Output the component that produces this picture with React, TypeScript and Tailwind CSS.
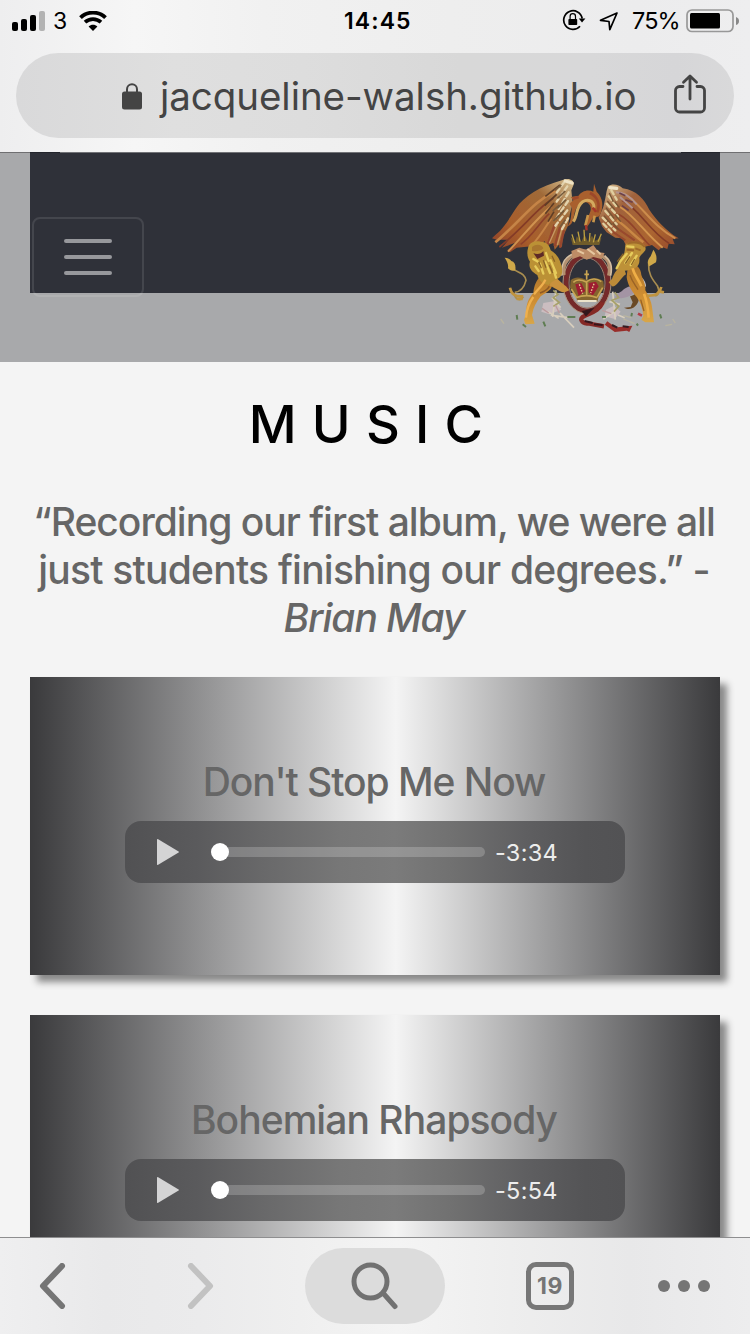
import React from "react";

const FONT = "font-['Inter','Liberation_Sans',sans-serif]";

function StatusBar() {
  return (
    <div className="flex h-10 items-center text-black">
      <svg className="ml-3 mt-px shrink-0" width="33" height="20" viewBox="0 0 33 20">
        <rect x="0" y="11" width="6" height="9" rx="2" />
        <rect x="9" y="8" width="6" height="12" rx="2" />
        <rect x="18" y="4" width="6" height="16" rx="2" />
        <rect x="27" y="0" width="6" height="20" rx="2" fill="#b3b3b3" />
      </svg>
      <span className="ml-[8px] mt-[2px] w-[15px] text-[23px] leading-10">3</span>
      <svg className="ml-[11px] mt-px shrink-0" width="28" height="20" viewBox="0 0 28 20">
        <path d="M1.5 6.6C8.500 0 19.500 0 26.500 6.600" fill="none" stroke="#000" strokeWidth="3.9" />
        <path d="M6 11.200c4.600-4.200 11.400-4.200 16 0" fill="none" stroke="#000" strokeWidth="3.7" />
        <path d="M9.600 15.600c2.600-2.400 6.200-2.400 8.800 0L14 20z" />
      </svg>
      <span className="ml-[237px] mt-[2px] w-[68px] whitespace-nowrap text-[23px] font-semibold leading-10 tracking-[1.1px]">14:45</span>
      <svg className="ml-[150px] shrink-0" width="24" height="22" viewBox="0 0 24 22">
        <path d="M20.200 9.500A9.300 9.300 0 1 0 18 17.200" fill="none" stroke="#000" strokeWidth="1.7" />
        <path d="M16.800 9.500h6.600L20 13.600z" />
        <rect x="6.4" y="10" width="8.8" height="6" rx="0.8" />
        <path d="M8.100 10V7.400a2.700 2.700 0 0 1 5.400 0V10" fill="none" stroke="#000" strokeWidth="1.2" />
      </svg>
      <svg className="ml-[13px] mt-px shrink-0" width="20" height="20" viewBox="0 0 20 20">
        <path d="M18 2 1.500 9.300 10 10.500 10.800 18.600z" fill="none" stroke="#000" strokeWidth="1.7" strokeLinejoin="round" />
      </svg>
      <span className="ml-[13px] mt-[2px] w-[49px] whitespace-nowrap text-[23.5px] leading-10 tracking-[-0.9px]">75%</span>
      <svg className="ml-[5px] mt-px shrink-0" width="54" height="24" viewBox="0 0 54 24">
        <rect x="1" y="1" width="46" height="21.5" rx="5" fill="none" stroke="#989898" strokeWidth="1.7" />
        <rect x="4" y="4" width="30" height="15.5" rx="1.5" />
        <path d="M50 8q3 1 3 4t-3 4z" fill="#888" />
      </svg>
    </div>
  );
}

function AddressBar() {
  return (
    <div className="mx-4 mt-[13px] flex h-[85px] items-center rounded-full bg-[linear-gradient(90deg,#d9d9da_0%,#dfdfdf_22%,#dddddd_40%,#d8d8d8_62%,#d8d8d9_80%,#d6d6d8_92%,#d9d9da_100%)] text-[#444]">
      <svg className="ml-[106px] mt-px shrink-0" width="20" height="27" viewBox="0 0 20 27">
        <rect x="0" y="8.5" width="20" height="18" rx="2.5" fill="#444" />
        <path d="M5 9.500V6.200a5 5 0 0 1 10 0V9.500" fill="none" stroke="#444" strokeWidth="2" />
      </svg>
      <span className="ml-[18px] mt-[3px] w-[478px] whitespace-nowrap text-[38.5px] tracking-[-0.06px]">jacqueline-walsh.github.io</span>
      <svg className="-mt-[4px] ml-[36px] shrink-0" width="32" height="40" viewBox="0 0 32 40" fill="none" stroke="#444" strokeWidth="2.8" strokeLinecap="round" strokeLinejoin="round">
        <path d="M9 12.500H5.500a4 4 0 0 0-4 4V34a4 4 0 0 0 4 4h21a4 4 0 0 0 4-4V16.500a4 4 0 0 0-4-4H23" />
        <path d="M16 25V2.500M9.500 8.300 16 2l6.500 6.300" />
      </svg>
    </div>
  );
}

function LeftLion() {
  return (
    <g>
      <path d="M186 330c18-6 34 2 36 20l-10 22c-10 10-22 16-30 22-14 18-22 34-26 56l8 26-28 2-4-14 8-18c-4-26 6-46 20-62 2-20 8-40 26-54z" fill="url(#lion)" />
      <path d="M212 330c14 2 30 22 46 34l10 12-14 6c-14 0-26-12-44-20z" fill="#c9913c" />
      <path d="M144 250c2-16 20-24 38-20 20 0 28 14 30 26 14 8 26 22 30 38 6 16 8 34-4 44-14 8-22 10-32 22-18-2-30-14-34-30-18-10-28-24-22-40-8-12-10-26-6-40z" fill="#bb9136" />
      <path d="M156 246c12-10 30-8 34 4-8 10-24 10-34 8z" fill="#a8762f" />
      <path d="M160 264c12 6 24 2 30-6l2 14-20 10z" fill="#5d2c25" />
      <path d="M160 282l14 8M198 264l8 24M180 296l10 30M196 290l14 34M212 286l16 38M166 304l10 14M222 318l6 20" stroke="#e6cc5b" strokeWidth="7" strokeLinecap="round" />
      <path d="M190 286l8 22M208 300l10 24M176 290l8 20M216 272l8 18" stroke="#8a6426" strokeWidth="4" />
      <path d="M196 344c-6 16-18 24-34 44M160 396c-12 16-20 36-22 62" stroke="#efb04e" strokeWidth="7" fill="none" />
      <path d="M180 384c12-4 22-10 28-20" stroke="#8f5a25" strokeWidth="5" fill="none" />
      <path d="M130 396c-10 14-24 8-28-12M104 382c20-2 30-20 34-36-4-22-22-22-36-32" fill="none" stroke="#a98d50" strokeWidth="5" />
      <path d="M74 278c10 0 16 4 20 10 10 2 14 12 12 28-10 4-16 0-22-6 2-14-4-22-10-32z" fill="#cfa84a" />
      <path d="M90 368c4 18 12 28 40 26M110 402l18 0" fill="none" stroke="#c09440" strokeWidth="8" />
    </g>
  );
}

function RightLion() {
  return (
    <g>
      <path d="M444 300c22-6 38 4 40 30 6 16 14 30 12 46 8 14 18 32 20 50l6 46h-26l-12-8 6-12c-2-22-8-40-20-56-16-18-28-40-30-60z" fill="url(#lion)" />
      <path d="M428 296c-12 12-26 26-32 46l-10 10 10 12c14 4 24-24 42-36z" fill="#bd8b38" />
      <path d="M436 240c8-12 26-12 40-6 14 0 24 10 20 22-6 10-14 12-18 22 2 14-2 26-14 32-20 8-38 10-52 2 2-20 8-32 18-42 6-10 4-20 6-30z" fill="#bd9138" />
      <path d="M442 236c18-6 42-4 52 10M440 254l22 2M466 250l16 6" stroke="#a06a2b" strokeWidth="6" fill="none" />
      <path d="M440 266l-20 24M456 264l-20 30M470 272l-18 28M420 290l-10 20M442 244l18 2" stroke="#e6cc5b" strokeWidth="7" strokeLinecap="round" />
      <path d="M430 266l-18 24M450 274l-14 22M464 282l-10 18" stroke="#8a6426" strokeWidth="4" />
      <path d="M458 310c4 20 16 30 26 54M492 386c8 20 12 42 14 72" stroke="#efae46" strokeWidth="8" fill="none" />
      <path d="M450 330c6 20 16 30 24 44M482 404l10 34" stroke="#9a6226" strokeWidth="4" fill="none" />
      <path d="M506 298c-2 26 10 44 26 64 8 18 4 30-8 30" fill="none" stroke="#a98d50" strokeWidth="5" />
      <path d="M520 254c8 10 12 24 8 38l-20 12c-10-12-2-22 4-30z" fill="#cfa84a" />
      <path d="M544 366c-4 18-16 28-44 26M540 380l12 2" fill="none" stroke="#c09440" strokeWidth="8" />
    </g>
  );
}

function Crest() {
  return (
    <svg className="h-[180px] w-[210px] shrink-0" viewBox="0 0 630 540">
      <defs>
        <linearGradient id="wingL" x1="1" y1="0" x2="0" y2="1">
          <stop offset="0" stopColor="#d9c597" />
          <stop offset="0.3" stopColor="#a06a38" />
          <stop offset="0.7" stopColor="#a85d2b" />
          <stop offset="1" stopColor="#8a3d2b" />
        </linearGradient>
        <linearGradient id="wingR" x1="0" y1="0" x2="1" y2="1">
          <stop offset="0" stopColor="#d9c597" />
          <stop offset="0.3" stopColor="#a0623c" />
          <stop offset="0.7" stopColor="#ab6530" />
          <stop offset="1" stopColor="#95482c" />
        </linearGradient>
        <linearGradient id="lion" x1="0" y1="0" x2="0" y2="1">
          <stop offset="0" stopColor="#b0762c" />
          <stop offset="0.5" stopColor="#cd8c31" />
          <stop offset="1" stopColor="#d8a648" />
        </linearGradient>
        <filter id="soften" x="-5%" y="-5%" width="110%" height="110%">
          <feGaussianBlur stdDeviation="2.1" />
        </filter>
      </defs>
      <g filter="url(#soften)">
        <g>
          <path d="M246 46c14-8 34-4 36 10l-8 20 4 40-8 30-6 36-16 34-2 30-10-6-12 14-4-20-22 8-4-14-24 22-16-6-44 4-20 14-8-6 28-24-44 16 20-24-36 0-14-4 10-10c26-20 42-50 62-80 24-36 72-66 138-84z" fill="url(#wingL)" />
          <path d="M228 76C160 110 120 170 46 232" stroke="#c58446" strokeWidth="8" fill="none" />
          <path d="M220 100C170 130 130 190 58 246" stroke="#843b28" strokeWidth="5" fill="none" />
          <path d="M214 124C180 150 140 200 84 260" stroke="#cf9250" strokeWidth="6" fill="none" />
          <path d="M208 146C180 170 160 210 122 238" stroke="#8d402b" strokeWidth="5" fill="none" />
          <path d="M214 160C196 186 180 216 156 240" stroke="#c58345" strokeWidth="6" fill="none" />
          <path d="M224 178l-22 64M240 186l-16 58M252 196l-12 52" stroke="#98472e" strokeWidth="7" fill="none" />
          <path d="M232 180l-24 54M246 190l-14 50" stroke="#c59763" strokeWidth="4" fill="none" />
          <path d="M240 60l-44 34M230 88l-36 34M222 114l-26 32M222 140l-18 30" stroke="#5f3e28" strokeWidth="5" />
          <path d="M252 52l-24 34M262 64l-32 46M266 82l-30 50M264 108l-34 50M262 136l-36 46M264 160l-20 36" stroke="#e3d3ad" strokeWidth="7" strokeLinecap="round" strokeDasharray="14 9" />
          <path d="M256 78l-24 22M258 104l-26 26M252 136l-24 26M256 164l-16 22M244 60l-20 16M238 120l-20 18M236 152l-16 16" stroke="#765a3b" strokeWidth="5" />
          <path d="M256 48l20 6" stroke="#efe3c6" strokeWidth="10" strokeLinecap="round" />
        </g>
        <g>
          <path d="M384 64c14-10 34-4 44 6 42 6 64 32 80 64 22 32 46 60 88 86l-18 2 6 16-18-2-4 16-16-6-10 10-20-16-24 6-28-14-26 10-10-22-22-2-26-16-14-18-10-26 14-32 6-26 4-22z" fill="url(#wingR)" />
          <path d="M430 84c52 30 86 100 156 136" stroke="#cc8c4c" strokeWidth="6" fill="none" />
          <path d="M426 106c52 26 80 90 142 130" stroke="#833b27" strokeWidth="5" fill="none" />
          <path d="M420 126c42 24 76 80 128 122" stroke="#d2944e" strokeWidth="6" fill="none" />
          <path d="M416 148c40 20 64 66 94 94" stroke="#914229" strokeWidth="5" fill="none" />
          <path d="M410 166c30 18 50 46 80 66" stroke="#c98845" strokeWidth="7" fill="none" />
          <path d="M400 182l64 44M392 196l44 30" stroke="#98492d" strokeWidth="6" />
          <path d="M408 82c22 0 46 16 62 36M420 96l38 34" stroke="#b39490" strokeWidth="6" fill="none" />
          <path d="M418 84l18 8M436 104l22 8M426 122l20 14" stroke="#6b4048" strokeWidth="5" />
          <path d="M394 76l16 28M386 94l26 34M380 116l34 38M376 138l34 40M368 158l38 38M370 176l24 26" stroke="#dfce9f" strokeWidth="7" strokeLinecap="round" strokeDasharray="14 9" />
          <path d="M388 84l12 26M382 108l22 26M378 128l24 32M372 152l24 28M404 110l14 18M406 150l16 20M398 174l18 20" stroke="#755534" strokeWidth="4" />
          <path d="M390 68l20 2" stroke="#efe3c6" strokeWidth="10" strokeLinecap="round" />
        </g>
        <path d="M262 184c22-6 16-32 26-52 8-18 26-26 38-16 14 14 2 32-8 48l-2 28 12-16 10-16 20-6c14-26 12-56-8-74l-8-24-2 24c-18-8-36 0-44 12l-24 4 8 10-12 10 8 12c-4 18 0 40-14 56z" fill="#a9602d" />
        <path d="M280 170c14-18 6-44 28-60 16-10 34-2 34 18" fill="none" stroke="#d3a95f" strokeWidth="9" />
        <path d="M330 84c20 10 32 30 22 58M296 96l-18 6" stroke="#9c472c" strokeWidth="8" fill="none" />
        <path d="M324 150l-8 32M344 152l-4 20" stroke="#c89548" strokeWidth="8" />
        <path d="M318 180l2 16M338 128l10 12" stroke="#a5342b" strokeWidth="7" />
        <path d="M272 216l14 16 4-18 14 16 10-20 10 20 12-18 8 16 20-10-6 22h-80z" fill="#6f5b2c" />
        <path d="M276 208l8 26M294 200l6 30M312 194l2 34M330 204l-2 26M346 208l-6 24M364 206l-10 24" stroke="#bda03f" strokeWidth="4" />
        <g fill="none">
          <ellipse cx="321" cy="354" rx="63" ry="84" stroke="#742c29" strokeWidth="15" />
          <ellipse cx="321" cy="354" rx="72" ry="92" stroke="#ae8f79" strokeWidth="3" />
          <ellipse cx="321" cy="354" rx="54" ry="75" stroke="#a07e6e" strokeWidth="3" />
          <path d="M252 330c-4-32 6-42 20-54 30-24 70-22 98 0 18 10 22 30 16 56" stroke="#b3906f" strokeWidth="10" />
          <path d="M246 332c-4-34 6-52 30-64M392 332c6-34-2-46-18-60" stroke="#d5bfa2" strokeWidth="5" />
        </g>
        <path d="M274 258l24-10 20 6 22-14 16 22 18 2-10 18-24-6-20 8-20-10-22 8z" fill="#bd8c66" />
        <path d="M292 256l20 10M322 252l22 16M350 256l12 12" stroke="#e6c7a0" strokeWidth="6" />
        <path d="M272 346c14-12 30-10 48 0 18-10 36-8 50 2l2 20-16 28-4 14h-60l-4-16-18-26z" fill="#84652f" />
        <path d="M286 358l18-4 12 24-20 16zM326 354l22-4 8 14-18 28-12-10z" fill="#9e1e30" />
        <path d="M320 316v28M313 328h14M280 352q14-14 40 0v40M320 350q22-16 44 0M274 372l16 26M368 368l-16 28M288 398q32-12 64 0" fill="none" stroke="#c9a552" strokeWidth="5" />
        <path d="M292 408h58" stroke="#ece3cb" strokeWidth="6" />
        <path d="M298 358l10 28M342 356l-10 28" stroke="#e0cc90" strokeWidth="4" strokeDasharray="5 4" />
        <path d="M474 332c12 4 24 16 24 32l-14 10z" fill="#c7c6cd" />
        <path d="M472 366c-14-8-36 0-46 12-10 6-18 10-22 20 24 6 48-4 62-18z" fill="#a394a4" />
        <path d="M474 372c-4 14-14 20-24 22l8 18-6 14-20 2c20 12 40-4 44-22z" fill="#6b4a27" />
        <LeftLion />
        <RightLion />
        <path d="M190 414l36-6 18 26-36 14-24-8zM378 434l24-12 20 18-18 22-30-8z" fill="#cbbdc0" />
        <path d="M228 376l-10 80M216 398l26 30M204 440l32 20M240 444l42 44M212 450l52 8M398 380l8 84M388 410l32 8M370 462l34-22M414 450l20 8" stroke="#d8cebd" strokeWidth="5" fill="none" />
        <path d="M220 376l14 12-14 10 18 14-18 12M404 382l12 16-20 8 20 18-14 16" stroke="#a6a067" strokeWidth="5" fill="none" />
        <path d="M186 430l20 14M226 420l12 24M366 436l28 10" stroke="#bc9a9c" strokeWidth="4" />
        <path d="M110 450l2 14M128 478l10 8M190 470l6 14M262 456h24M366 456h12M456 444l-2 10M470 476l4 6M540 448l4 12" stroke="#5f7d52" strokeWidth="6" />
        <path d="M474 446l12 6" stroke="#b33b47" strokeWidth="8" />
        <path d="M62 462l10 14M578 462l8 12M556 482l20-4M430 452l24 6M430 462l34 14" stroke="#b9b49f" strokeWidth="4" />
        <path d="M368 412c-12 28-34 30-60 44-12 10 2 20 20 20l44 8" fill="none" stroke="#852928" strokeWidth="13" />
        <path d="M310 440l24-6-16 16zM314 468l24 6M342 478l26 2" fill="#291c21" stroke="#35191e" strokeWidth="6" />
        <path d="M378 474l28 20 40-4-4 8" fill="none" stroke="#982e2c" strokeWidth="13" />
        <path d="M396 480l16 8M428 484l18 2" stroke="#311b20" strokeWidth="6" />
      </g>
    </svg>
  );
}

function NavBar() {
  return (
    <div className="h-[209px] shrink-0 bg-[#a8a9ab] px-[30px]">
      <div className="flex h-[140px] items-start justify-between bg-[#2f3139] pl-[2px] pr-[30px]">
        <button className="mt-[64px] flex h-20 w-28 shrink-0 flex-col items-center justify-center gap-3 rounded-lg border-2 border-white/10">
          <span className="h-1 w-12 rounded-full bg-[#97989c]" />
          <span className="h-1 w-12 rounded-full bg-[#97989c]" />
          <span className="h-1 w-12 rounded-full bg-[#97989c]" />
        </button>
        <div className="mt-3">
          <Crest />
        </div>
      </div>
    </div>
  );
}

function TrackCard({ title, time, titleClass }: { title: string; time: string; titleClass: string }) {
  return (
    <section className="flex h-[298px] shrink-0 flex-col items-center bg-[linear-gradient(90deg,#3a3a3c_0%,#f4f4f4_53%,#3a3a3c_100%)] pt-[81px] shadow-[7px_7px_7px_#888]">
      <h2 className={"whitespace-nowrap pr-[2px] text-[39px] font-medium leading-[48px] text-[#666] " + titleClass}>{title}</h2>
      <div className="mt-[15px] flex h-[62px] w-[500px] items-center rounded-2xl bg-[linear-gradient(90deg,#515153_0%,#5a5a5c_14%,#6a6a6b_29%,#777777_43%,#7b7b7b_54%,#717171_65%,#5f5f61_80%,#545456_92%,#525254_100%)]">
        <svg className="ml-8 shrink-0" width="22" height="26" viewBox="0 0 22 26">
          <path d="M0 .8Q0-.4 1.200.3L21.600 12.400Q22.400 13 21.600 13.600L1.200 25.700Q0 26.400 0 25.200z" fill="#d4d4d5" />
        </svg>
        <div className="ml-[32px] flex h-[18px] w-[274px] items-center">
          <span className="h-[18px] w-[18px] shrink-0 rounded-full bg-white" />
          <span className="-ml-1 h-[10px] flex-1 rounded-r-full bg-white/20" />
        </div>
        <span className="ml-[10px] mt-px whitespace-nowrap text-[23.5px] tracking-[0.3px] text-[#ededed]">{time}</span>
      </div>
    </section>
  );
}

function Toolbar() {
  return (
    <nav className="flex h-[97px] shrink-0 items-center border-t border-[#8e8e8f] bg-[linear-gradient(90deg,#efeff0_0%,#e9e9ea_14%,#ebebec_27%,#efefef_40%,#f4f4f4_53%,#eeeeee_68%,#e8e8e9_84%,#ededee_100%)]">
      <svg className="ml-[39px] shrink-0" width="27" height="46" viewBox="0 0 27 46" fill="none" stroke="#757575" strokeWidth="6" strokeLinecap="round" strokeLinejoin="round">
        <path d="M23 3 4 23l19 20" />
      </svg>
      <svg className="ml-[121px] shrink-0" width="27" height="46" viewBox="0 0 27 46" fill="none" stroke="#c2c2c2" strokeWidth="6" strokeLinecap="round" strokeLinejoin="round">
        <path d="m4 3 19 20L4 43" />
      </svg>
      <div className="ml-[91px] flex h-[76px] w-[140px] shrink-0 items-center justify-center rounded-full bg-[#dcdcdc]">
        <svg width="48" height="48" viewBox="0 0 48 48" fill="none" stroke="#717171" strokeWidth="5">
          <circle cx="19.500" cy="19.500" r="16.500" />
          <path d="m32 31 12 13.500" strokeLinecap="round" />
        </svg>
      </div>
      <div className="ml-[81px] flex h-12 w-12 shrink-0 items-center justify-center rounded-[10px] border-[5px] border-[#777] text-[23px] font-bold tracking-[0.6px] text-[#757575]">19</div>
      <div className="ml-[84px] flex gap-2">
        <span className="h-3 w-3 rounded-full bg-[#757575]" />
        <span className="h-3 w-3 rounded-full bg-[#757575]" />
        <span className="h-3 w-3 rounded-full bg-[#757575]" />
      </div>
    </nav>
  );
}

export default function App() {
  return (
    <div className={"flex h-[1334px] w-[750px] flex-col overflow-hidden bg-[#f4f4f4] " + FONT}>
      <header className="h-[152px] shrink-0 bg-[linear-gradient(90deg,#eeeeef_0%,#f6f6f6_18%,#f1f1f1_35%,#eeeeee_60%,#ececed_85%,#eeeeef_100%)]">
        <StatusBar />
        <AddressBar />
      </header>
      <div className="flex h-px shrink-0 bg-[#6f6f71] px-[30px]">
        <div className="flex-1 bg-[#22242b] pl-[30px] pr-[39px]">
          <div className="h-px bg-[#717276]" />
        </div>
      </div>
      <main className="flex min-h-0 flex-1 flex-col overflow-hidden">
        <NavBar />
        <div className="flex shrink-0 flex-col px-[30px]">
          <h1 className="mt-[29px] pr-[3px] text-center text-[52.5px] font-medium leading-[67px] tracking-[15.2px] text-black">MUSIC</h1>
          <p className="mt-10 pr-[2px] text-center text-[39px] font-medium leading-[48px] text-[#666]">
            <span className="block whitespace-nowrap tracking-[-1px]">“Recording our first album, we were all</span>
            <span className="block whitespace-nowrap tracking-[-0.77px]">just students finishing our degrees.” -</span>
            <em className="block whitespace-nowrap tracking-[-1.1px]">Brian May</em>
          </p>
          <div className="mt-[35px] flex flex-col gap-10">
            <TrackCard title="Don't Stop Me Now" time="-3:34" titleClass="tracking-[-1.05px]" />
            <TrackCard title="Bohemian Rhapsody" time="-5:54" titleClass="tracking-[-0.95px]" />
          </div>
        </div>
      </main>
      <Toolbar />
    </div>
  );
}
